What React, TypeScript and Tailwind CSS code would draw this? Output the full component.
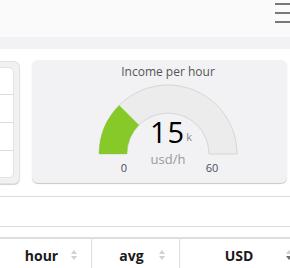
import React from "react";

const font = { fontFamily: '"Open Sans", "Liberation Sans", sans-serif' };

function SortArrows({ active }: { active?: boolean }) {
  return (
    <div className="absolute right-[14px] top-1/2 -translate-y-1/2 flex flex-col gap-[2px]">
      <svg width="6" height="4" viewBox="0 0 6 4">
        <path d="M0 4 L3 0 L6 4 Z" fill="#d0d0d0" />
      </svg>
      <svg width="6" height="4" viewBox="0 0 6 4">
        <path d="M0 0 L6 0 L3 4 Z" fill={active ? "#6f6f6f" : "#d0d0d0"} />
      </svg>
    </div>
  );
}

function Gauge() {
  const cx = 90;
  const cy = 70;
  const R = 69;
  const r = 41;
  const frac = 15 / 60;
  const a = Math.PI * (1 - frac);
  const ox = cx + R * Math.cos(a);
  const oy = cy - R * Math.sin(a);
  const ix = cx + r * Math.cos(a);
  const iy = cy - r * Math.sin(a);
  const gray = `M ${cx - R} ${cy} A ${R} ${R} 0 0 1 ${cx + R} ${cy} L ${cx + r} ${cy} A ${r} ${r} 0 0 0 ${cx - r} ${cy} Z`;
  const green = `M ${cx - R} ${cy} A ${R} ${R} 0 0 1 ${ox} ${oy} L ${ix} ${iy} A ${r} ${r} 0 0 0 ${cx - r} ${cy} Z`;
  return (
    <div className="relative w-[180px] h-[96px]">
      <svg width="180" height="96" viewBox="0 0 180 96" className="absolute left-0 top-0">
        <path d={gray} fill="#ececec" stroke="#d6d6d6" strokeWidth="1" />
        <path d={green} fill="#88c92a" />
      </svg>
      <div className="absolute left-0 right-0 top-[35px] h-[26px] flex justify-center items-end pl-[6px]">
        <span className="text-[29px] leading-[26px] font-medium text-black tracking-[1px]">15</span>
        <span className="text-[11px] leading-[11px] text-[#8a8a8a] ml-[1px] mb-[3px]">k</span>
      </div>
      <div className="absolute left-0 right-0 top-[69px] text-center text-[13px] leading-none text-[#9a9a9a]">
        usd/h
      </div>
      <div className="absolute left-[40px] w-[12px] top-[78px] text-center text-[11px] leading-none text-[#4a4a5a]">0</div>
      <div className="absolute left-[124px] w-[20px] top-[78px] text-center text-[11px] leading-none text-[#4a4a5a]">60</div>
    </div>
  );
}

export default function App() {
  return (
    <div className="w-[290px] h-[268px] overflow-hidden bg-white" style={font}>
      <div className="h-[37px] bg-[#fafafa] flex justify-end">
        <div className="flex flex-col gap-[7px] pt-[3px] w-[15px]">
          <div className="h-[2px] bg-[#787878]" />
          <div className="h-[2px] bg-[#787878]" />
          <div className="h-[2px] bg-[#787878]" />
        </div>
      </div>
      <div className="h-[12px] bg-[#f2f2f4]" />
      <div className="h-[135px] pt-[11px] flex gap-[12px]">
        <div className="ml-[-80px] w-[100px] h-[123px] mt-[1px] rounded-[6px] bg-[#f1f1f3] border border-[#e2e2e4] shadow-[0_1px_1px_rgba(0,0,0,0.18)] pt-[5px] pr-[5px]">
          <div className="h-[111px] rounded-[5px] bg-white border border-[#e3e3e5] flex flex-col">
            <div className="h-[27px] border-b border-[#dcdcdc]" />
            <div className="h-[28px] border-b border-[#dcdcdc]" />
            <div className="h-[28px] border-b border-[#dcdcdc]" />
            <div className="flex-1" />
          </div>
        </div>
        <div className="w-[255px] h-[123px] rounded-[6px] bg-[#f2f2f4] shadow-[0_1px_1px_rgba(0,0,0,0.22)] pl-[17px] flex flex-col items-center">
          <div className="pt-[4px] text-[12px] leading-[16px] text-[#555]">Income per hour</div>
          <div className="mt-[4px]">
            <Gauge />
          </div>
        </div>
      </div>
      <div className="h-[13px] border-b border-[#dcdcdc]" />
      <div className="h-[30px] border-b border-[#dcdcdc]" />
      <div className="h-[10px]" />
      <div className="flex border-t-2 border-[#dedede] h-[40px] font-bold text-[14px] text-[#1a1a1a]">
        <div className="relative w-[92px] shrink-0 border-r border-[#dedede] pr-[8px] flex justify-center items-center h-[32px]">
          hour
          <SortArrows />
        </div>
        <div className="relative w-[88px] shrink-0 border-r border-[#dedede] pr-[8px] flex justify-center items-center h-[32px]">
          avg
          <SortArrows />
        </div>
        <div className="relative w-[126px] shrink-0 pr-[8px] flex justify-center items-center h-[32px]">
          USD
          <SortArrows active />
        </div>
      </div>
    </div>
  );
}
